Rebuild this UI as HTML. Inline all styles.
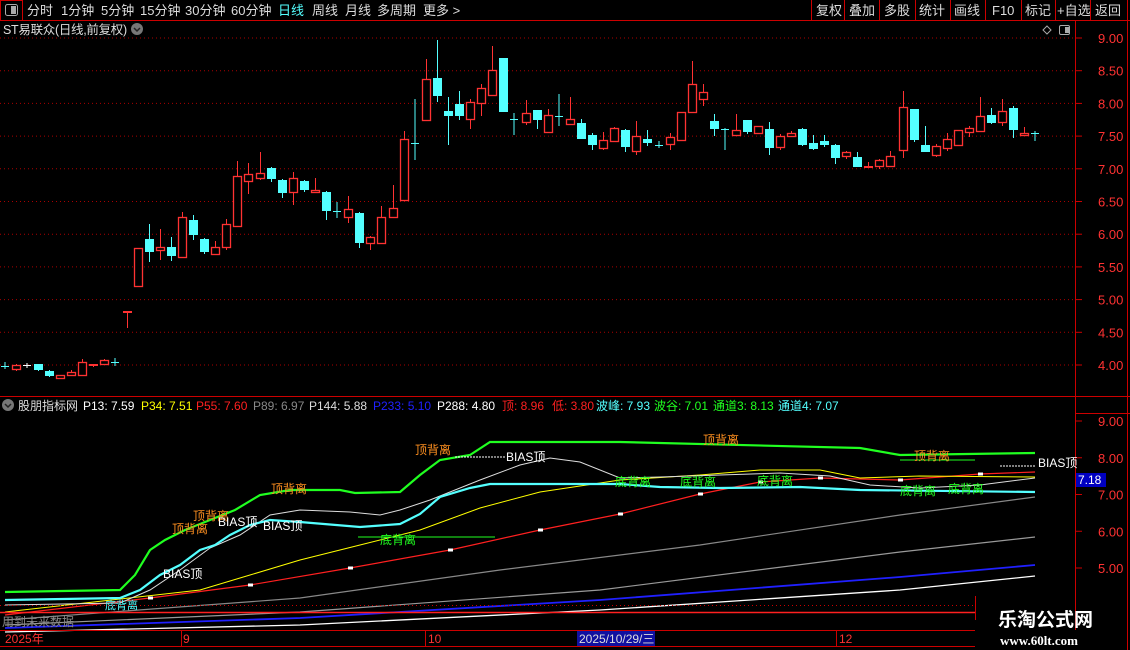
<!DOCTYPE html>
<html><head><meta charset="utf-8"><style>
*{margin:0;padding:0}
body{width:1130px;height:650px;background:#000;overflow:hidden;position:relative;font-family:"Liberation Sans","Noto Sans CJK SC",sans-serif;color:#ddd}
svg{position:absolute;left:0;top:0}
</style></head><body>
<svg id="s" width="1130" height="650" xmlns="http://www.w3.org/2000/svg" font-family="Liberation Sans, Noto Sans CJK SC, sans-serif">
<rect x="0.5" y="0.5" width="22" height="20" fill="none" stroke="#c00"/>
<rect x="5.5" y="4.5" width="12" height="11" rx="2" fill="none" stroke="#aaa"/>
<rect x="11" y="6" width="5" height="8" fill="#aaa"/>
<line x1="0" y1="20.5" x2="1130" y2="20.5" stroke="#c00"/>
<g stroke="#c00"><line x1="811.5" y1="0" x2="811.5" y2="20"/><line x1="844.5" y1="0" x2="844.5" y2="20"/><line x1="879.5" y1="0" x2="879.5" y2="20"/><line x1="915.5" y1="0" x2="915.5" y2="20"/><line x1="950.5" y1="0" x2="950.5" y2="20"/><line x1="985.5" y1="0" x2="985.5" y2="20"/><line x1="1021.5" y1="0" x2="1021.5" y2="20"/><line x1="1055.5" y1="0" x2="1055.5" y2="20"/><line x1="1090.5" y1="0" x2="1090.5" y2="20"/><line x1="1127.5" y1="0" x2="1127.5" y2="650"/></g>
<g font-size="13" fill="#ddd">
<text x="27" y="15">分时</text><text x="61" y="15">1分钟</text><text x="101" y="15">5分钟</text><text x="140" y="15">15分钟</text><text x="185" y="15">30分钟</text><text x="231" y="15">60分钟</text><text x="278" y="15" fill="#54ffff">日线</text><text x="312" y="15">周线</text><text x="345" y="15">月线</text><text x="377" y="15">多周期</text><text x="423" y="15">更多 &gt;</text>
<text x="816" y="15">复权</text><text x="849" y="15">叠加</text><text x="884" y="15">多股</text><text x="919" y="15">统计</text><text x="954" y="15">画线</text><text x="992" y="15">F10</text><text x="1025" y="15">标记</text><text x="1057" y="15">+自选</text><text x="1095" y="15">返回</text>
<text x="3" y="34" font-size="12.5" letter-spacing="-0.3">ST易联众(日线,前复权)</text>
</g>
<circle cx="137" cy="29" r="6" fill="#777"/><path d="M134 28 l3 3 l3 -3" stroke="#222" stroke-width="1.5" fill="none"/>
<path d="M1047 26 l4 4 l-4 4 l-4 -4z" fill="none" stroke="#aaa"/>
<rect x="1059.5" y="25.5" width="10" height="9" rx="1.5" fill="none" stroke="#aaa"/><rect x="1065" y="27" width="4" height="6" fill="#aaa"/>
<line x1="1075.5" y1="21" x2="1075.5" y2="630" stroke="#c00"/>
<line x1="0" y1="396.5" x2="1130" y2="396.5" stroke="#c00"/>
<line x1="1075" y1="413.5" x2="1130" y2="413.5" stroke="#c00"/>
<g id="grid" stroke="#a00" stroke-dasharray="1,3"></g>
<g id="ticks" stroke="#c00"></g>
<g font-size="13" fill="#ff3232" id="lab"></g>
<g id="candles"></g>
<circle cx="8" cy="405" r="6" fill="#777"/><path d="M5 404 l3 3 l3 -3" stroke="#222" stroke-width="1.5" fill="none"/>
<g font-size="12">
<text x="18" y="410" fill="#ddd">股朋指标网</text>
<text x="83" y="410" fill="#fff">P13: 7.59</text>
<text x="141" y="410" fill="#ff0">P34: 7.51</text>
<text x="196" y="410" fill="#ff2020">P55: 7.60</text>
<text x="253" y="410" fill="#888">P89: 6.97</text>
<text x="309" y="410" fill="#ddd">P144: 5.88</text>
<text x="373" y="410" fill="#2020ff">P233: 5.10</text>
<text x="437" y="410" fill="#fff">P288: 4.80</text>
<text x="502" y="410" fill="#ff2020">顶: 8.96</text>
<text x="552" y="410" fill="#ff2020">低: 3.80</text>
<text x="596" y="410" fill="#54ffff">波峰: 7.93</text>
<text x="654" y="410" fill="#20ff20">波谷: 7.01</text>
<text x="713" y="410" fill="#20ff20">通道3: 8.13</text>
<text x="778" y="410" fill="#54ffff">通道4: 7.07</text>
</g>
<g id="ind" fill="none"></g>
<rect x="1076" y="473" width="30" height="14" fill="#0000c0"/><text x="1078" y="484" font-size="12" fill="#fff">7.18</text>
<line x1="0" y1="612.5" x2="975" y2="612.5" stroke="#ff2020" stroke-width="1.5"/>
<line x1="0" y1="605.5" x2="975" y2="605.5" stroke="#c00" stroke-dasharray="1,3"/>
<line x1="975.5" y1="596" x2="975.5" y2="620" stroke="#c00"/>
<text x="2" y="626" font-size="12" fill="#888">用到未来数据</text>
<line x1="0" y1="630.5" x2="975" y2="630.5" stroke="#c00"/>
<line x1="0" y1="646.5" x2="975" y2="646.5" stroke="#c00"/>
<g stroke="#c00"><line x1="181.5" y1="630" x2="181.5" y2="646"/><line x1="425.5" y1="630" x2="425.5" y2="646"/><line x1="836.5" y1="630" x2="836.5" y2="646"/></g>
<g font-size="12" fill="#ff3232"><text x="5" y="643">2025年</text><text x="183" y="643">9</text><text x="428" y="643">10</text><text x="839" y="643">12</text></g>
<rect x="577" y="631" width="78" height="15" fill="#1010a0"/><text x="579" y="643" font-size="12" fill="#ddd">2025/10/29/三</text>
<text x="998" y="626" font-size="19" font-weight="bold" fill="#fff">乐淘公式网</text>
<text x="1000" y="645" font-size="13" font-weight="bold" fill="#fff" font-family="Liberation Serif, serif">www.60lt.com</text>
</svg>
<script>
const NS="http://www.w3.org/2000/svg";
function el(p,t,a){const e=document.createElementNS(NS,t);for(const k in a)e.setAttribute(k,a[k]);document.getElementById(p).appendChild(e);return e;}
for(let i=0;i<=10;i++){const y=38+i*32.7;el('grid','line',{x1:0,y1:y,x2:1075,y2:y});
 el('ticks','line',{x1:1075,y1:y,x2:1082,y2:y});
 const tx=el('lab','text',{x:1098,y:y+5});tx.textContent=(9-i*0.5).toFixed(2);}
for(let i=0;i<5;i++){const y=421+i*36.75;el('ticks','line',{x1:1075,y1:y,x2:1082,y2:y});const tx=el('lab','text',{x:1098,y:y+5});tx.textContent=(9-i).toFixed(2);}
const R="#ff3232",C="#54ffff";
const d=[[5,'x',366,366,362,369],[16,'r',365,369,364,371],[27,'w',365,365,363,368],[38,'c',364,370,364,371],[49,'c',371,376,370,377],[60,'r',375,378,375,378],[71,'r',372,375,370,376],[82,'r',362,375,359,375],[93,'r',365,366,364,367],[104,'r',360,364,359,365],[115,'x',362,362,358,366],[127,'r',312,313,312,328],
[138,'r',248,286,248,286],[149,'c',239,252,224,262],[160,'r',247,250,229,260],[171,'c',247,256,237,261],[182,'r',217,257,212,258],[193,'c',220,235,215,240],[204,'c',239,252,238,254],[215,'r',247,254,241,255],[226,'r',224,247,219,250],[237,'r',176,226,161,227],[248,'r',174,181,163,194],[260,'r',173,178,152,180],[271,'c',168,179,167,182],[282,'c',180,193,179,198],[293,'r',178,192,172,205],[304,'c',181,190,180,192],[315,'r',190,192,178,193],[326,'c',192,211,191,220],[337,'x',211,211,202,218],[348,'r',209,217,196,223],[359,'c',213,243,212,248],[370,'r',237,243,236,250],[381,'r',217,243,206,243],[393,'r',208,217,185,217],[404,'r',139,200,131,200],[415,'x',143,143,99,160],
[426,'r',79,120,59,120],[437,'c',78,96,40,102],[448,'c',111,116,97,145],[459,'c',104,116,91,120],[470,'r',102,119,99,129],[481,'r',88,103,84,116],[492,'r',70,95,46,95],[503,'c',58,112,58,112],[514,'x',119,119,113,135],[526,'r',113,122,100,125],[537,'c',110,120,110,129],[548,'r',115,132,109,132],[559,'x',116,116,94,126],[570,'r',119,124,97,124],[581,'c',123,139,119,139],[592,'c',135,145,133,150],[603,'r',140,148,132,150],[614,'r',128,141,127,141],[625,'c',130,147,129,152],[636,'r',136,151,121,155],[647,'c',139,143,130,146],[659,'x',145,145,141,148],[670,'r',137,144,133,150],[681,'r',112,140,112,141],[692,'r',84,112,61,112],[703,'r',92,99,84,106],
[714,'c',121,129,114,136],[725,'x',129,129,128,150],[736,'r',130,135,114,135],[747,'c',120,132,120,134],[758,'r',126,133,126,133],[769,'c',129,148,122,155],[780,'r',136,147,134,150],[791,'r',133,136,131,136],[802,'c',129,145,128,146],[813,'c',143,149,135,150],[824,'c',141,145,135,147],[835,'c',145,158,144,164],[846,'r',152,156,151,159],[857,'c',157,167,152,167],[868,'r',167,168,162,168],[879,'r',160,166,159,169],[890,'r',156,166,151,166],[903,'r',107,150,91,158],[914,'c',109,140,109,142],[925,'c',145,152,126,152],[936,'r',146,155,144,157],[947,'r',139,148,133,151],[958,'r',130,145,130,146],[969,'r',128,132,126,137],[980,'r',116,131,97,131],[991,'c',115,123,108,124],[1002,'r',111,122,99,126],[1013,'c',108,130,106,138],[1024,'r',133,135,127,135],[1035,'x',133,133,131,141]];
for(const [x,t,a,b,h,l] of d){
 const col=t=='r'?R:(t=='w'?'#fff':C);
 if(t=='x'||t=='w'){el('candles','line',{x1:x,y1:h,x2:x,y2:l,stroke:col});el('candles','line',{x1:x-4,y1:a+.5,x2:x+4,y2:a+.5,stroke:col});continue;}
 el('candles','line',{x1:x+.5,y1:h,x2:x+.5,y2:l,stroke:col});
 if(t=='r'){if(b-a<2)el('candles','rect',{x:x-4,y:a-1,width:9,height:2,fill:col});else el('candles','rect',{x:x-3.5,y:a+.5,width:8,height:b-a,fill:'#000',stroke:col,'stroke-width':1.3});}
 else el('candles','rect',{x:x-4,y:a,width:9,height:b-a,fill:col});
}
function pl(pts,c,w,extra){const a={points:pts.map(p=>p.join(',')).join(' '),stroke:c,'stroke-width':w||1.2,fill:'none'};Object.assign(a,extra||{});el('ind','polyline',a);}
pl([[5,632],[300,625],[600,610],[900,590],[1035,576]],'#fff',1.3);
pl([[5,628],[300,618],[600,600],[900,577],[1035,565]],'#2020ff',1.8);
pl([[5,625],[300,612],[600,590],[900,552],[1035,537]],'#999',1.2);
pl([[5,620],[300,598],[500,570],[700,545],[900,515],[1035,497]],'#888',1.2);
const red=[[5,615],[150,598],[250,585],[350,568],[450,550],[540,530],[620,514],[700,494],[760,482],[820,478],[900,480],[980,474],[1035,472]];
pl(red,'#ff2020',1.2);
for(let i=1;i<red.length-1;i++){const [x,y]=red[i];el('ind','rect',{x:x-2,y:y-1.5,width:5,height:3,fill:'#fff'});}
pl([[5,612],[200,590],[250,575],[300,560],[360,545],[420,530],[480,508],[540,492],[620,480],[700,475],[760,470],[820,470],[860,478],[920,476],[1035,477]],'#ff0',1);
pl([[5,605],[120,603],[150,590],[180,570],[210,548],[240,535],[270,515],[300,510],[350,512],[380,515],[400,510],[430,500],[480,480],[520,465],[550,458],[580,462],[620,478],[660,477],[720,475],[780,473],[830,476],[870,485],[920,488],[980,485],[1035,478]],'#ddd',1);
pl([[5,600],[120,598],[140,590],[160,575],[180,565],[200,550],[215,545],[230,535],[250,525],[270,520],[300,522],[360,527],[400,524],[420,514],[440,497],[470,488],[490,484],[620,484],[660,487],[720,488],[800,487],[860,490],[1035,492]],'#54ffff',2.2);
pl([[5,592],[120,590],[135,575],[150,550],[165,540],[185,530],[210,520],[235,510],[260,495],[290,490],[340,490],[355,493],[400,492],[420,475],[440,460],[470,455],[490,442],[620,442],[860,448],[900,455],[1035,453]],'#20ff20',2.2);
pl([[358,537],[495,537]],'#20ff20',1);
pl([[900,460],[975,460]],'#20ff20',1);
pl([[455,457],[505,457]],'#fff',1,{'stroke-dasharray':'2,1'});
pl([[1000,466],[1036,466]],'#fff',1,{'stroke-dasharray':'2,1'});
function tx(x,y,s,c,f){const e=el('ind','text',{x:x,y:y,fill:c,'font-size':f||12,stroke:'none'});e.textContent=s;}
const O='#ff9020',G='#20ff20',W='#fff';
tx(415,454,'顶背离',O);tx(703,444,'顶背离',O);tx(914,460,'顶背离',O);tx(271,493,'顶背离',O);tx(193,520,'顶背离',O);tx(172,533,'顶背离',O);
tx(506,461,'BIAS顶',W);tx(218,526,'BIAS顶',W);tx(263,530,'BIAS顶',W);tx(163,578,'BIAS顶',W);tx(1038,467,'BIAS顶',W);
tx(380,544,'底背离',G);tx(615,486,'底背离',G);tx(680,486,'底背离',G);tx(757,485,'底背离',G);tx(900,495,'底背离',G);tx(948,493,'底背离',G);tx(105,609,'底背离','#54ffff',11);
</script>
</body></html>
